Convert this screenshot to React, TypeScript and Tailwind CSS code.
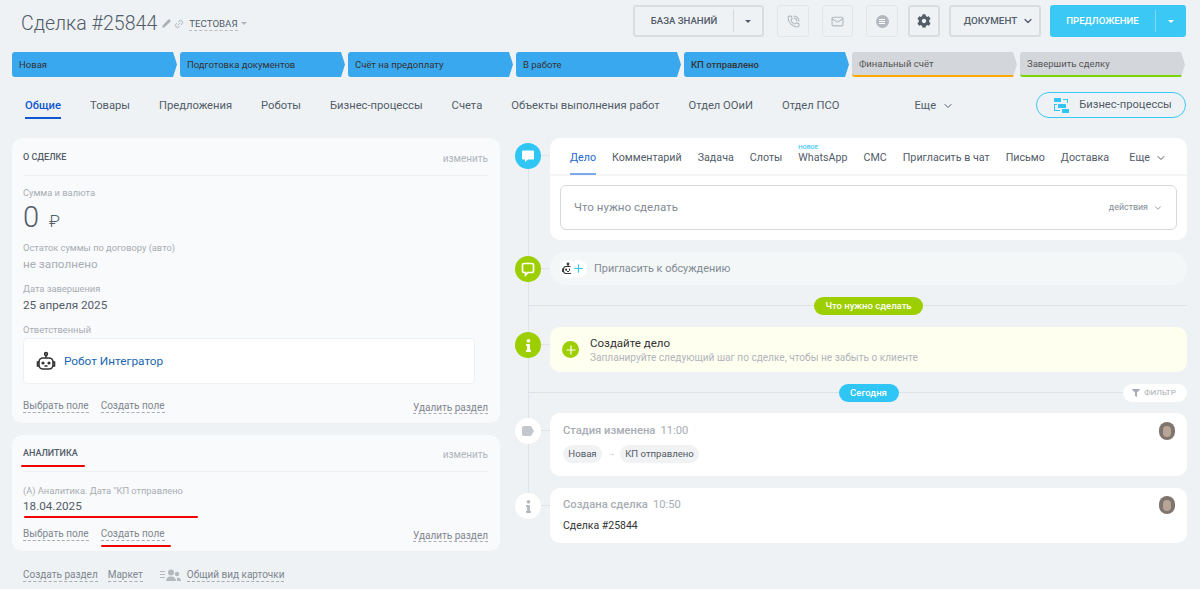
import React from 'react';
import { ChevronDown, Pencil, Link2, PhoneCall, Mail, Plus } from 'lucide-react';
import { FaCog, FaFilter, FaInfo } from 'react-icons/fa';

const stages = [
  { name: 'Новая', cls: 'bg-[#39a8ef] text-[#333]' },
  { name: 'Подготовка документов', cls: 'bg-[#39a8ef] text-[#333]' },
  { name: 'Счёт на предоплату', cls: 'bg-[#39a8ef] text-[#333]' },
  { name: 'В работе', cls: 'bg-[#39a8ef] text-[#333]' },
  { name: 'КП отправлено', cls: 'bg-[#39a8ef] text-[#333] font-medium' },
  { name: 'Финальный счёт', cls: 'bg-[#d3d6db] text-[#555] border-b-2 border-[#ffa900]' },
  { name: 'Завершить сделку', cls: 'bg-[#d3d6db] text-[#555] border-b-2 border-[#7bd500]' },
];

const tabs = ['Товары', 'Предложения', 'Роботы', 'Бизнес-процессы', 'Счета', 'Объекты выполнения работ', 'Отдел ООиИ', 'Отдел ПСО'];

const feedTabs = ['Комментарий', 'Задача', 'Слоты', 'WhatsApp', 'СМС', 'Пригласить в чат', 'Письмо', 'Доставка'];

const RobotIcon = ({ size = 22 }: { size?: number }) => (
  <svg width={size} height={size} viewBox="0 0 22 22" fill="none" stroke="#333" strokeWidth="1.6">
    <circle cx="11" cy="3" r="1.4" />
    <path d="M11 4.5V7" />
    <rect x="4" y="7" width="14" height="11" rx="4" />
    <path d="M4 11H2.5v4H4M18 11h1.5v4H18" />
    <circle cx="8" cy="12" r="0.8" fill="#333" />
    <circle cx="14" cy="12" r="0.8" fill="#333" />
    <path d="M9.5 15h3" />
  </svg>
);

const Avatar = () => (
  <div className="w-4 h-[18px] rounded-full bg-[#7f756e] flex items-center justify-center">
    <div className="w-[8px] h-[11px] rounded-full bg-[#b8a597]" />
  </div>
);

const DashedLink = ({ children }: { children: React.ReactNode }) => (
  <span className="text-[10px] leading-[13px] text-[#80868e] border-b border-dashed border-[#a8adb4] whitespace-nowrap">{children}</span>
);

const FieldActions = () => (
  <div className="flex items-center gap-3 pr-[1px]">
    <DashedLink>Выбрать поле</DashedLink>
    <DashedLink>Создать поле</DashedLink>
    <span className="ml-auto">
      <DashedLink>Удалить раздел</DashedLink>
    </span>
  </div>
);

const CardHead = ({ title }: { title: string }) => (
  <div className="flex items-center justify-between h-[37px] pt-[2px] pr-[1px] border-b border-[#eef1f4]">
    <span className="text-[9px] font-medium text-[#535c69] uppercase">{title}</span>
    <span className="text-[10px] text-[#b0b5bb]">изменить</span>
  </div>
);

const Dot = ({ bg, children }: { bg: string; children: React.ReactNode }) => (
  <div className="relative shrink-0 w-[26px] h-[26px] mr-[9px] flex items-center justify-center">
    <div className={`w-[26px] h-[26px] rounded-full flex items-center justify-center ${bg}`}>{children}</div>
    <div className="absolute left-[26px] top-[12px] w-[9px] h-px bg-[#dfe3e8]" />
  </div>
);

const Divider = ({ label, cls, children }: { label: string; cls: string; children?: React.ReactNode }) => (
  <div className="relative h-[18px] ml-[13px] pl-[22px] flex items-center justify-center">
    <div className="absolute inset-x-0 top-[8px] h-px bg-[#dfe3e8]" />
    <span className={`relative h-[18px] flex items-center justify-center rounded-full text-[9.5px] font-medium text-white ${cls}`}>{label}</span>
    {children}
  </div>
);

export default function App() {
  return (
    <div className="relative h-[589px] overflow-hidden bg-[#eef2f4] text-[#535c69] font-['Roboto',sans-serif]">
      {/* Header */}
      <div className="flex items-start h-[42px] pt-[5px] pl-[21px] pr-[14px]">
        <div className="flex items-center h-[32px] pt-[5px]">
          <h1 className="text-[19.6px] font-light text-[#535c69] leading-none">Сделка #25844</h1>
          <Pencil size={9} className="ml-[5px] text-[#a8adb4]" fill="#a8adb4" />
          <Link2 size={10} className="ml-[3px] -rotate-45 text-[#a8adb4]" />
          <span className="ml-[5px] text-[9.7px] text-[#535c69] uppercase border-b border-dashed border-[#bbb] leading-[13px]">Тестовая</span>
          <span className="ml-[3px] w-0 h-0 border-x-[3px] border-x-transparent border-t-[3px] border-t-[#b0b5bb]" />
        </div>

        <div className="ml-auto flex items-center h-[32px] w-[131px] border-2 border-[#d9dde0] rounded-[3px]">
          <span className="w-[98px] text-center text-[9.6px] font-medium text-[#535c69]">БАЗА ЗНАНИЙ</span>
          <span className="w-px h-[22px] bg-[#d5d9dd]" />
          <span className="mx-auto w-0 h-0 border-x-[3px] border-x-transparent border-t-[3px] border-t-[#535c69]" />
        </div>
        <div className="ml-[13px] w-[32px] h-[32px] border border-[#e3e6e9] rounded-[3px] flex items-center justify-center">
          <PhoneCall size={13} className="text-[#b4b9bf]" />
        </div>
        <div className="ml-[13px] w-[31px] h-[32px] border border-[#e3e6e9] rounded-[3px] flex items-center justify-center">
          <Mail size={13} className="text-[#b4b9bf]" />
        </div>
        <div className="ml-[13px] w-[32px] h-[32px] border border-[#e3e6e9] rounded-[3px] flex items-center justify-center">
          <span className="w-[13px] h-[13px] rounded-full bg-[#b4b9bf] flex flex-col items-center justify-center gap-px">
            <span className="w-[6px] h-px bg-white" />
            <span className="w-[6px] h-px bg-white" />
            <span className="w-[6px] h-px bg-white" />
          </span>
        </div>
        <div className="ml-[10px] w-[32px] h-[32px] border-2 border-[#d9dde0] rounded-[3px] flex items-center justify-center">
          <FaCog size={14} className="text-[#535c69]" />
        </div>
        <div className="ml-[9px] w-[92px] h-[32px] border-2 border-[#d9dde0] rounded-[3px] flex items-center justify-center gap-[5px] pl-[8px]">
          <span className="text-[9.8px] font-medium text-[#535c69]">ДОКУМЕНТ</span>
          <ChevronDown size={12} strokeWidth={2.5} />
        </div>
        <div className="ml-[9px] w-[136px] h-[32px] rounded-[3px] bg-[#3bc8f5] flex items-center text-white">
          <span className="w-[105px] text-center text-[9.6px] font-medium">ПРЕДЛОЖЕНИЕ</span>
          <span className="w-px h-[22px] bg-[#7ddcf9]" />
          <span className="mx-auto w-0 h-0 border-x-[3px] border-x-transparent border-t-[3px] border-t-white" />
        </div>
      </div>

      {/* Stages */}
      <div className="flex gap-[3px] pl-[12px] mt-[10px]">
        {stages.map((s) => (
          <div
            key={s.name}
            className={`w-[165px] h-[25px] flex items-center pl-[7px] pt-[2px] text-[9.5px] rounded-l-[3px] [clip-path:polygon(0_0,161px_0,100%_50%,161px_100%,0_100%)] ${s.cls}`}
          >
            {s.name}
          </div>
        ))}
      </div>

      {/* Tabs */}
      <div className="flex items-center h-[26px] mt-[15px] pl-[25px] pr-[14px] text-[11.2px] whitespace-nowrap">
        <div className="flex items-center gap-[29px] pt-[2px]">
          <span className="relative font-medium text-[#1058d0]">
            Общие
            <span className="absolute left-0 right-0 top-[19px] h-[2px] bg-[#1058d0]" />
          </span>
          {tabs.map((t) => (
            <span key={t}>{t}</span>
          ))}
        </div>
        <span className="ml-[75px] pt-[2px] flex items-center gap-[6px]">
          Еще <ChevronDown size={12} />
        </span>
        <div className="ml-auto w-[150px] h-[26px] border border-[#3bc8f5] rounded-full flex items-center justify-center gap-[9px] pl-[3px]">
          <svg width="17" height="17" viewBox="0 0 17 17" fill="#2fc6f6">
            <rect x="1" y="1" width="7" height="4" rx="0.5" />
            <rect x="5" y="7" width="8" height="4" rx="0.5" />
            <rect x="9" y="12" width="7" height="4" rx="0.5" />
            <path d="M10 2h5v4h-1V3h-4zM1 7h3v1H2v5h5v1H1z" />
          </svg>
          <span>Бизнес-процессы</span>
        </div>
      </div>

      <div className="flex mt-[20px] pl-[12px] pr-[13px] gap-[15px]">
        {/* Left column */}
        <div className="w-[488px] shrink-0">
          <div className="h-[285px] rounded-[10px] bg-[#f9fafb] px-[11px] pt-[1px] flex flex-col">
            <CardHead title="О сделке" />
            <div className="mt-[10px] text-[9.3px] leading-[14px] text-[#a8adb4]">Сумма и валюта</div>
            <div className="flex items-baseline gap-[10px] h-[33px] leading-[34px] text-[#535c69]">
              <span className="text-[29px] font-light">0</span>
              <span className="text-[17px] font-light">₽</span>
            </div>
            <div className="mt-[8px] text-[9.3px] leading-[14px] text-[#a8adb4]">Остаток суммы по договору (авто)</div>
            <div className="mt-[1px] text-[11.7px] leading-[16px] text-[#a8adb4]">не заполнено</div>
            <div className="mt-[10px] text-[9.3px] leading-[14px] text-[#a8adb4]">Дата завершения</div>
            <div className="mt-[1px] text-[11.7px] leading-[16px]">25 апреля 2025</div>
            <div className="mt-[10px] text-[9.3px] leading-[14px] text-[#a8adb4]">Ответственный</div>
            <div className="mt-[1px] w-[452px] h-[46px] rounded-[4px] border border-[#eef1f4] bg-white flex items-center pl-[11px] pt-[2px] gap-[7px]">
              <RobotIcon />
              <span className="text-[11.8px] text-[#2067b0]">Робот Интегратор</span>
            </div>
            <div className="mt-[10px]">
              <FieldActions />
            </div>
          </div>

          <div className="relative mt-[12px] h-[116px] rounded-[10px] bg-[#f9fafb] px-[11px] flex flex-col">
            <CardHead title="Аналитика" />
            <div className="mt-[12px] text-[9.3px] leading-[14px] text-[#a8adb4]">(А) Аналитика. Дата "КП отправлено</div>
            <div className="text-[11.7px] leading-[16px]">18.04.2025</div>
            <div className="mt-[8px]">
              <FieldActions />
            </div>
            {/* red marker strokes */}
            <div className="absolute left-[9px] top-[30px] w-[64px] h-[2px] rounded-full bg-[#f00000]" />
            <div className="absolute left-[12px] top-[81px] w-[174px] h-[2px] rounded-full bg-[#f00000]" />
            <div className="absolute left-[89px] top-[110px] w-[70px] h-[2px] rounded-full bg-[#f00000]" />
          </div>

          <div className="flex items-center mt-[17px] pl-[11px] gap-[10px]">
            <DashedLink>Создать раздел</DashedLink>
            <DashedLink>Маркет</DashedLink>
            <div className="ml-[7px] flex items-center gap-[6px]">
              <svg width="21" height="13" viewBox="0 0 21 13" fill="#b4b9bf">
                <path d="M0 2h5v1H0zM0 5h5v1H0zM0 8h5v1H0z" />
                <circle cx="11" cy="3.5" r="3" />
                <path d="M6 12c0-3 2-4.500 5-4.500s5 1.500 5 4.500z" />
                <circle cx="17" cy="5" r="2.200" />
                <path d="M17 8.500c2.500 0 4 1 4 3.500h-4z" />
              </svg>
              <DashedLink>Общий вид карточки</DashedLink>
            </div>
          </div>
        </div>

        {/* Timeline column */}
        <div className="relative flex-1 min-w-0">
          <div className="absolute left-[13px] top-[10px] w-px h-[360px] bg-[#dfe3e8]" />

          <div className="relative flex">
            <div className="pt-[5px]">
              <Dot bg="bg-[#2fc6f6]">
                <svg width="14" height="14" viewBox="0 0 14 14" fill="#fff">
                  <path d="M2 1.500h10a1 1 0 0 1 1 1v7a1 1 0 0 1-1 1H7l-3 2.500v-2.500H2a1 1 0 0 1-1-1v-7a1 1 0 0 1 1-1z" />
                </svg>
              </Dot>
            </div>
            <div className="flex-1 min-w-0 h-[102px] rounded-[10px] bg-white">
              <div className="flex items-center gap-[16px] h-[38px] pl-[20px] pr-[20px] pt-[4px] text-[10.7px] whitespace-nowrap border-b-2 border-[#f3f5f7]">
                <span className="relative text-[#2067d0]">
                  Дело
                  <span className="absolute left-0 right-0 top-[23px] h-[2px] bg-[#7fa8ea]" />
                </span>
                {feedTabs.map((t) => (
                  <span key={t} className="relative">
                    {t}
                    {t === 'WhatsApp' && (
                      <span className="absolute left-0 -top-[7px] text-[6px] leading-[7px] font-medium text-[#2fc6f6]">НОВОЕ</span>
                    )}
                  </span>
                ))}
                <span className="ml-auto flex items-center gap-[5px]">
                  Еще <ChevronDown size={12} />
                </span>
              </div>
              <div className="mx-[10px] mt-[9px] h-[45px] rounded-[6px] border border-[#d5d9dd] flex items-center pl-[13px] pr-[13px] pt-[1px]">
                <span className="text-[11.6px] text-[#828b95]">Что нужно сделать</span>
                <span className="ml-auto flex items-center gap-[5px] text-[8.9px] text-[#828b95]">
                  действия <ChevronDown size={10} />
                </span>
              </div>
            </div>
          </div>

          <div className="relative flex mt-[12px]">
            <div className="pt-[4px]">
              <Dot bg="bg-[#9dcf00]">
                <svg width="14" height="15" viewBox="0 0 14 15" fill="none" stroke="#fff" strokeWidth="1.700">
                  <path d="M3 1.500h8a1.500 1.500 0 0 1 1.500 1.500v6A1.500 1.500 0 0 1 11 10.500H7l-2.500 2.500v-2.500H3A1.500 1.500 0 0 1 1.500 9V3A1.500 1.500 0 0 1 3 1.500z" />
                </svg>
              </Dot>
            </div>
            <div className="flex-1 min-w-0 h-[33px] rounded-[16px] bg-[#f4f7f8] flex items-center pl-[10px]">
              <div className="relative w-[27px] h-[18px]">
                <div className="w-[16px] h-[18px] rounded-full bg-white flex items-center justify-center">
                  <RobotIcon size={14} />
                </div>
                <div className="absolute left-[10px] top-0 w-[17px] h-[18px] rounded-full bg-white flex items-center justify-center">
                  <Plus size={13} className="text-[#2fc6f6]" />
                </div>
              </div>
              <span className="ml-[7px] pt-[2px] text-[10.9px] text-[#828b95]">Пригласить к обсуждению</span>
            </div>
          </div>

          <div className="mt-[12px]">
            <Divider label="Что нужно сделать" cls="bg-[#9dcf00] w-[109px]" />
          </div>

          <div className="relative flex mt-[12px]">
            <div className="pt-[5px]">
              <Dot bg="bg-[#9dcf00]">
                <FaInfo size={13} className="text-white" />
              </Dot>
            </div>
            <div className="flex-1 min-w-0 h-[45px] rounded-[10px] bg-[#fffff0] flex items-center pl-[12px]">
              <span className="w-[17px] h-[17px] rounded-full bg-[#9dcf00] flex items-center justify-center">
                <Plus size={14} className="text-white" />
              </span>
              <div className="ml-[11px]">
                <div className="text-[11.5px] leading-[16px] text-[#333]">Создайте дело</div>
                <div className="text-[10.1px] leading-[14px] text-[#b0b5bb]">Запланируйте следующий шаг по сделке, чтобы не забыть о клиенте</div>
              </div>
            </div>
          </div>

          <div className="relative mt-[12px]">
            <Divider label="Сегодня" cls="bg-[#2fc6f6] w-[60px]">
              <div className="absolute right-0 top-0 h-[18px] w-[64px] rounded-full bg-white flex items-center justify-center gap-[4px] pr-[2px] text-[8px] text-[#a8adb4]">
                <FaFilter size={8} /> ФИЛЬТР
              </div>
            </Divider>
          </div>

          <div className="relative flex mt-[11px]">
            <div className="pt-[5px]">
              <Dot bg="bg-white">
                <span className="w-[12px] h-[10px] rounded-[2px] bg-[#c4c8cd] [clip-path:polygon(0_0,75%_0,100%_50%,75%_100%,0_100%)]" />
              </Dot>
            </div>
            <div className="flex-1 min-w-0 h-[63px] rounded-[10px] bg-white pl-[13px] pr-[12px] pt-[9px]">
              <div className="flex items-center justify-between h-[18px]">
                <div className="text-[11.2px] text-[#a8adb4]">
                  <span className="font-medium">Стадия изменена</span>
                  <span className="ml-[5px]">11:00</span>
                </div>
                <Avatar />
              </div>
              <div className="mt-[5px] flex items-center gap-[5px] text-[9.6px]">
                <span className="w-[39px] h-[18px] rounded-full bg-[#f1f2f3] flex items-center justify-center">Новая</span>
                <span className="text-[8px] text-[#a8adb4]">→</span>
                <span className="w-[79px] h-[18px] rounded-full bg-[#f1f2f3] flex items-center justify-center">КП отправлено</span>
              </div>
            </div>
          </div>

          <div className="relative flex mt-[12px]">
            <div className="pt-[5px]">
              <Dot bg="bg-white">
                <FaInfo size={13} className="text-[#b4b9bf]" />
              </Dot>
            </div>
            <div className="flex-1 min-w-0 h-[55px] rounded-[10px] bg-white pl-[13px] pr-[12px] pt-[8px]">
              <div className="flex items-center justify-between h-[18px]">
                <div className="text-[11.2px] text-[#a8adb4]">
                  <span className="font-medium">Создана сделка</span>
                  <span className="ml-[5px]">10:50</span>
                </div>
                <Avatar />
              </div>
              <div className="mt-[4px] text-[10.5px] text-[#333]">Сделка #25844</div>
            </div>
          </div>
        </div>
      </div>
    </div>
  );
}
